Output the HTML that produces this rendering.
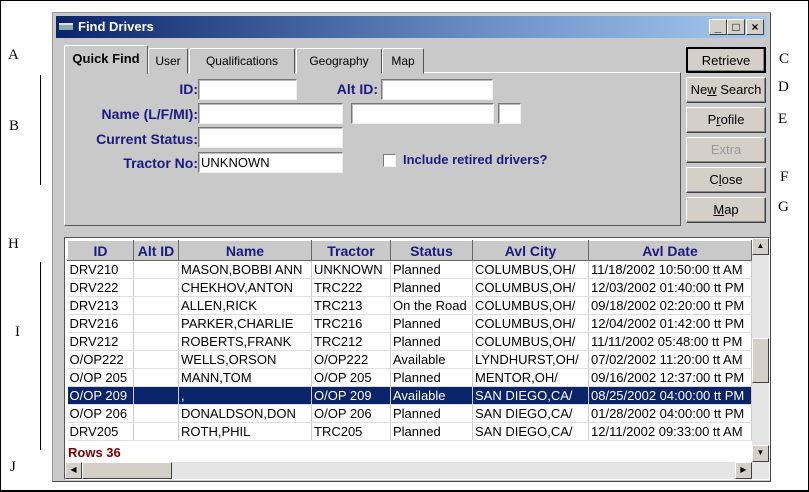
<!DOCTYPE html>
<html><head><style>
*{box-sizing:border-box;margin:0;padding:0}
body{width:809px;height:492px;background:#fff;position:relative;overflow:hidden;font-family:"Liberation Sans",sans-serif;font-size:12px}
.frame{position:absolute;left:0;top:0;width:809px;height:492px;border:1px solid #000;border-bottom-width:2px}
.lbl{position:absolute;font-family:"Liberation Serif",serif;font-size:15px;color:#000}
.vline{position:absolute;left:40px;width:1px;background:#000}
.win{position:absolute;left:52px;top:12px;width:719px;height:470px;background:#c9c9c9;border:1px solid #999;border-right-color:#444;border-bottom-color:#444}
.title{position:absolute;left:3px;top:3px;right:3px;height:22px;background:linear-gradient(90deg,#0a246a,#6b8fc4 60%,#a6caf0);color:#fff;font-weight:bold;font-size:13px;line-height:22px;padding-left:22px}
.tb{position:absolute;top:3px;width:18px;height:16px;background:#d4d0c8;border:1px solid;border-color:#fff #404040 #404040 #fff;color:#000;font-size:12px;line-height:14px;text-align:center;font-weight:bold}
.tab{position:absolute;height:26px;background:#c9c9c9;border:1px solid;border-color:#fff #555 transparent #fff;border-radius:2px 2px 0 0;font-size:12px;line-height:24px;text-align:center;color:#000}
.panel{position:absolute;left:11px;top:59px;width:617px;height:154px;border:1px solid;border-color:#fff #555 #555 #fff}
.f{position:absolute;color:#1a1a80;font-weight:bold;font-size:14px;text-align:right;white-space:nowrap}
.in{position:absolute;height:21px;background:#fff;border:1px solid;border-color:#777 #eee #eee #777;box-shadow:inset 1px 1px 0 #bbb;font-size:13px;line-height:19px;padding-left:2px}
.btn{position:absolute;left:633px;width:80px;height:26px;background:#d4d0c8;border:1px solid;border-color:#fff #404040 #404040 #fff;box-shadow:inset -1px -1px 0 #888;text-align:center;line-height:24px;font-size:13px;color:#000}
.grid{position:absolute;left:11px;top:224px;width:706px;height:243px;border:1px solid;border-color:#555 #fff #fff #555;background:#fff;overflow:hidden}
table{border-collapse:collapse;position:absolute;left:2px;top:2px;font-size:13px;table-layout:fixed}
th{height:20px;background:#c9c9c9;color:#1a1a80;font-size:14px;border:1px solid;border-color:#fff #666 #666 #fff;padding:0}
td{height:18px;line-height:16px;border-right:1px solid #ccc;border-bottom:1px solid #ddd;padding:0 2px;white-space:nowrap;overflow:hidden;color:#000}
tr.sel td{background:#0a246a;color:#fff}
.vs{position:absolute;right:0;top:0;width:17px;bottom:17px;background:#e4e4e4}
.hs{position:absolute;left:0;bottom:0;right:0;height:17px;background:#e4e4e4}
.sb{position:absolute;background:#d4d0c8;border:1px solid;border-color:#fff #404040 #404040 #fff;font-size:8px;line-height:14px;text-align:center}
</style></head><body>
<div class="frame"></div>
<div class="lbl" style="left:8px;top:47px">A</div>
<div class="lbl" style="left:9px;top:118px">B</div>
<div class="lbl" style="left:8px;top:236px">H</div>
<div class="lbl" style="left:15px;top:324px">I</div>
<div class="lbl" style="left:10px;top:459px">J</div>
<div class="lbl" style="left:779px;top:51px">C</div>
<div class="lbl" style="left:778px;top:79px">D</div>
<div class="lbl" style="left:778px;top:111px">E</div>
<div class="lbl" style="left:780px;top:169px">F</div>
<div class="lbl" style="left:778px;top:199px">G</div>
<div class="vline" style="top:75px;height:110px"></div>
<div class="vline" style="top:262px;height:188px"></div>
<div class="win">
 <div class="title"><span style="position:absolute;left:3px;top:7px;width:14px;height:7px;background:#8aa;border-top:2px solid #dde"></span>Find Drivers
  <div class="tb" style="right:40px">_</div><div class="tb" style="right:22px">□</div><div class="tb" style="right:3px">×</div></div>
 <div class="panel"></div>
 <div class="tab" style="left:11px;top:32px;width:84px;height:29px;font-weight:bold;font-size:13px;border-bottom:none;line-height:26px;z-index:2">Quick Find</div>
 <div class="tab" style="left:95px;top:35px;width:40px">User</div>
 <div class="tab" style="left:136px;top:35px;width:106px">Qualifications</div>
 <div class="tab" style="left:243px;top:35px;width:86px">Geography</div>
 <div class="tab" style="left:329px;top:35px;width:42px">Map</div>
 <div class="f" style="left:20px;top:68px;width:125px">ID:</div>
 <div class="in" style="left:145px;top:66px;width:99px"></div>
 <div class="f" style="left:230px;top:68px;width:95px">Alt ID:</div>
 <div class="in" style="left:328px;top:66px;width:112px"></div>
 <div class="f" style="left:20px;top:93px;width:125px">Name (L/F/MI):</div>
 <div class="in" style="left:145px;top:90px;width:145px"></div>
 <div class="in" style="left:298px;top:90px;width:143px"></div>
 <div class="in" style="left:445px;top:90px;width:23px"></div>
 <div class="f" style="left:20px;top:118px;width:125px">Current Status:</div>
 <div class="in" style="left:145px;top:114px;width:145px"></div>
 <div class="f" style="left:20px;top:142px;width:125px">Tractor No:</div>
 <div class="in" style="left:145px;top:139px;width:145px">UNKNOWN</div>
 <div style="position:absolute;left:330px;top:141px;width:13px;height:13px;background:#fff;border:1px solid;border-color:#777 #eee #eee #777"></div>
 <div class="f" style="left:350px;top:139px;text-align:left;font-size:13px">Include retired drivers?</div>
 <div class="btn" style="top:34px;border:2px solid #000">Retrieve</div>
 <div class="btn" style="top:64px">Ne<u>w</u> Search</div>
 <div class="btn" style="top:94px">P<u>r</u>ofile</div>
 <div class="btn" style="top:124px;color:#999">Extra</div>
 <div class="btn" style="top:154px">C<u>l</u>ose</div>
 <div class="btn" style="top:184px"><u>M</u>ap</div>
 <div class="grid">
 <table>
 <colgroup><col style="width:66px"><col style="width:45px"><col style="width:133px"><col style="width:79px"><col style="width:82px"><col style="width:116px"><col style="width:163px"></colgroup>
 <tr><th>ID</th><th>Alt ID</th><th>Name</th><th>Tractor</th><th>Status</th><th>Avl City</th><th>Avl Date</th></tr>
 <tr><td>DRV210</td><td></td><td>MASON,BOBBI ANN</td><td>UNKNOWN</td><td>Planned</td><td>COLUMBUS,OH/</td><td>11/18/2002 10:50:00 tt AM</td></tr>
 <tr><td>DRV222</td><td></td><td>CHEKHOV,ANTON</td><td>TRC222</td><td>Planned</td><td>COLUMBUS,OH/</td><td>12/03/2002 01:40:00 tt PM</td></tr>
 <tr><td>DRV213</td><td></td><td>ALLEN,RICK</td><td>TRC213</td><td>On the Road</td><td>COLUMBUS,OH/</td><td>09/18/2002 02:20:00 tt PM</td></tr>
 <tr><td>DRV216</td><td></td><td>PARKER,CHARLIE</td><td>TRC216</td><td>Planned</td><td>COLUMBUS,OH/</td><td>12/04/2002 01:42:00 tt PM</td></tr>
 <tr><td>DRV212</td><td></td><td>ROBERTS,FRANK</td><td>TRC212</td><td>Planned</td><td>COLUMBUS,OH/</td><td>11/11/2002 05:48:00 tt PM</td></tr>
 <tr><td>O/OP222</td><td></td><td>WELLS,ORSON</td><td>O/OP222</td><td>Available</td><td>LYNDHURST,OH/</td><td>07/02/2002 11:20:00 tt AM</td></tr>
 <tr><td>O/OP 205</td><td></td><td>MANN,TOM</td><td>O/OP 205</td><td>Planned</td><td>MENTOR,OH/</td><td>09/16/2002 12:37:00 tt PM</td></tr>
 <tr class="sel"><td>O/OP 209</td><td></td><td>,</td><td>O/OP 209</td><td>Available</td><td>SAN DIEGO,CA/</td><td>08/25/2002 04:00:00 tt PM</td></tr>
 <tr><td>O/OP 206</td><td></td><td>DONALDSON,DON</td><td>O/OP 206</td><td>Planned</td><td>SAN DIEGO,CA/</td><td>01/28/2002 04:00:00 tt PM</td></tr>
 <tr><td>DRV205</td><td></td><td>ROTH,PHIL</td><td>TRC205</td><td>Planned</td><td>SAN DIEGO,CA/</td><td>12/11/2002 09:33:00 tt AM</td></tr>
 </table>
 <div style="position:absolute;left:3px;top:207px;color:#800000;font-weight:bold;font-size:13px">Rows 36</div>
 <div class="vs"><div class="sb" style="left:0;top:0;width:17px;height:17px">▲</div><div class="sb" style="left:0;top:100px;width:17px;height:45px"></div><div class="sb" style="left:0;bottom:0;width:17px;height:17px">▼</div></div>
 <div class="hs"><div class="sb" style="left:0;top:0;width:17px;height:17px">◀</div><div class="sb" style="left:17px;top:0;width:90px;height:17px"></div><div class="sb" style="right:17px;top:0;width:17px;height:17px">▶</div></div>
 </div>
</div>
</body></html>
